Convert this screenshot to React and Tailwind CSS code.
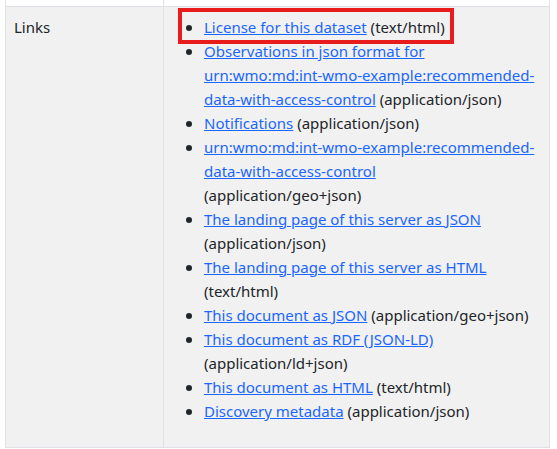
const links = [
  ["License for this dataset", "text/html"],
  ["Observations in json format for urn:wmo:md:int-wmo-example:recommended-data-with-access-control", "application/json"],
  ["Notifications", "application/json"],
  ["urn:wmo:md:int-wmo-example:recommended-data-with-access-control", "application/geo+json"],
  ["The landing page of this server as JSON", "application/json"],
  ["The landing page of this server as HTML", "text/html"],
  ["This document as JSON", "application/geo+json"],
  ["This document as RDF (JSON-LD)", "application/ld+json"],
  ["This document as HTML", "text/html"],
  ["Discovery metadata", "application/json"],
];

export default function App() {
  return (
    <main className="bg-white pr-[7px] pl-[5px] font-['Noto_Sans','Open_Sans',sans-serif] text-[15px] leading-6 text-[#212529]">
      <table className="w-full border-collapse">
        <tbody>
          <tr className="h-[6px]">
            <td className="border border-t-0 border-[#dee2e6]" />
            <td className="border border-t-0 border-[#dee2e6]" />
          </tr>
          <tr className="bg-[#f1f1f1] align-top">
            <td className="w-[158px] border border-[#dee2e6] p-2">Links</td>
            <td className="border border-[#dee2e6] py-2 pr-3.5 pl-2">
              <ul className="mb-4 list-none pl-8">
                {links.map(([label, type], index) => (
                  <li
                    key={label}
                    className="relative before:absolute before:top-2.5 before:-left-[18px] before:size-1.5 before:rounded-full before:bg-[#212529]"
                  >
                    <a href="#" className="text-[#1a66ff] underline">{label}</a> ({type})
                    {index === 0 && (
                      <span className="pointer-events-none absolute -top-[7px] -left-[26px] h-9 w-[276px] border-4 border-[#e81c1c]" />
                    )}
                  </li>
                ))}
              </ul>
            </td>
          </tr>
        </tbody>
      </table>
    </main>
  );
}
